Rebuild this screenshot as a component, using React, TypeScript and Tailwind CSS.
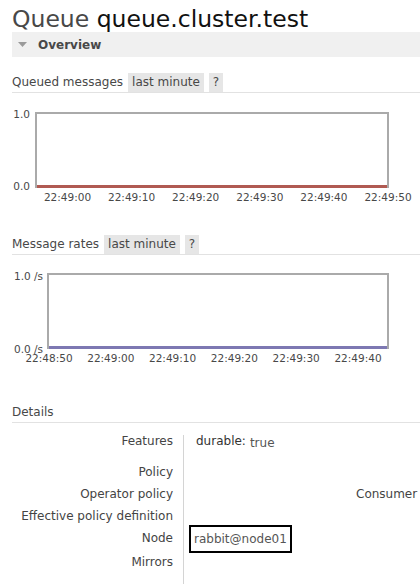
import React from "react";

function Chart(props: {
  height: number;
  padClass: string;
  boxClass: string;
  lineClass: string;
  yLabelClass: string;
  yTop: string;
  yBottom: string;
  yTopClass: string;
  yBottomClass: string;
  ticks: string[];
  firstCenter: number;
  step: number;
  tickTop: number;
}) {
  return (
    <div className={"relative " + props.padClass} style={{ height: props.height }}>
      <div className={props.boxClass}>
        <div className="flex-1" />
        <div className={props.lineClass} />
      </div>
      <div className={props.yLabelClass + " " + props.yTopClass}>{props.yTop}</div>
      <div className={props.yLabelClass + " " + props.yBottomClass}>{props.yBottom}</div>
      {props.ticks.map((t, i) => (
        <div
          key={t}
          className="absolute w-[60px] text-center text-[10.5px] leading-[12px] whitespace-nowrap text-[#484848]"
          style={{ left: props.firstCenter + i * props.step - 30, top: props.tickTop }}
        >
          {t}
        </div>
      ))}
    </div>
  );
}

function SectionHeading({ title, withOptions }: { title: string; withOptions?: boolean }) {
  return (
    <div className="flex h-[20px] items-stretch border-b border-[#e2e2e2] leading-[19px] whitespace-nowrap">
      <span>{title}</span>
      {withOptions && (
        <>
          <span className="ml-[5px] bg-[#e6e6e6] px-[4px]">last minute</span>
          <span className="ml-[5px] bg-[#e6e6e6] px-[4px]">?</span>
        </>
      )}
    </div>
  );
}

export default function App() {
  const rows1 = ["22:49:00", "22:49:10", "22:49:20", "22:49:30", "22:49:40", "22:49:50"];
  const rows2 = ["22:48:50", "22:49:00", "22:49:10", "22:49:20", "22:49:30", "22:49:40"];
  return (
    <div className="h-[584px] w-[420px] overflow-hidden bg-white font-['DejaVu_Sans',Verdana,sans-serif] text-[12px] text-[#484848]">
      <div className="pl-[12px]">
        <h1 className="h-[32px] whitespace-nowrap pt-[3px] text-[23.5px] font-normal leading-[32px] text-[#484848]">
          Queue <span className="text-[#111]">queue.cluster.test</span>
        </h1>
        <div className="flex h-[25px] items-center bg-[#f0f0f0]">
          <svg className="ml-[6px]" width="9" height="5" viewBox="0 0 9 5">
            <polygon points="0,0 9,0 4.5,5" fill="#9a9a9a" />
          </svg>
          <span className="ml-[11px] font-bold text-[#484848]">Overview</span>
        </div>

        <div className="mt-[16px]">
          <SectionHeading title="Queued messages" withOptions />
        </div>
        <Chart
          height={142}
          padClass="pt-[19px]"
          boxClass="ml-[23px] flex h-[76px] w-[354px] flex-col border-2 border-b-0 border-[#aaaaaa]"
          lineClass="h-[3px] bg-[#b05a52]"
          yLabelClass="absolute left-0 w-[18px] text-right text-[10.5px] leading-[12px] whitespace-nowrap"
          yTop="1.0"
          yBottom="0.0"
          yTopClass="top-[15px]"
          yBottomClass="top-[87px]"
          ticks={rows1}
          firstCenter={55.5}
          step={64.1}
          tickTop={98}
        />

        <SectionHeading title="Message rates" withOptions />
        <Chart
          height={148}
          padClass="pt-[18px]"
          boxClass="ml-[35px] flex h-[76px] w-[342px] flex-col border-2 border-b-0 border-[#aaaaaa]"
          lineClass="h-[3px] bg-[#7d78b2]"
          yLabelClass="absolute left-0 w-[31px] text-right text-[10.5px] leading-[12px] whitespace-nowrap"
          yTop="1.0 /s"
          yBottom="0.0 /s"
          yTopClass="top-[15px]"
          yBottomClass="top-[88px]"
          ticks={rows2}
          firstCenter={37}
          step={61.8}
          tickTop={97}
        />

        <SectionHeading title="Details" />

        <div className="mt-[12px] flex whitespace-nowrap">
          <div className="flex w-[328px] shrink-0 flex-col">
            <div className="flex h-[26px] leading-[12px]">
              <div className="w-[171px] pr-[10px] text-right text-[#444]">Features</div>
              <div className="flex flex-1 items-start border-l border-[#d4d4d4] pl-[12px]">
                <span className="text-[#333]">durable:</span>
                <span className="ml-[4px] pt-[2px] text-[#555]">true</span>
              </div>
            </div>
            <div className="flex h-[22px] leading-[22px]">
              <div className="w-[171px] pr-[10px] text-right text-[#444]">Policy</div>
              <div className="flex-1 border-l border-[#d4d4d4]" />
            </div>
            <div className="flex h-[22px] leading-[22px]">
              <div className="w-[171px] pr-[10px] text-right text-[#444]">Operator policy</div>
              <div className="flex-1 border-l border-[#d4d4d4]" />
            </div>
            <div className="flex h-[20px] leading-[22px]">
              <div className="w-[171px] pr-[10px] text-right text-[#444]">Effective policy definition</div>
              <div className="flex-1 border-l border-[#d4d4d4]" />
            </div>
            <div className="flex h-[28px]">
              <div className="w-[171px] pr-[10px] pt-[2px] text-right leading-[22px] text-[#444]">Node</div>
              <div className="flex-1 border-l border-[#d4d4d4]">
                <div className="ml-[5px] inline-block h-[28px] border-2 border-black px-[3px] leading-[24px] text-[#555]">
                  rabbit@node01
                </div>
              </div>
            </div>
            <div className="flex h-[31px] leading-[18px]">
              <div className="w-[171px] pr-[10px] text-right text-[#444]">Mirrors</div>
              <div className="flex-1 border-l border-[#d4d4d4]" />
            </div>
          </div>
          <div className="shrink-0 pl-[16px] pt-[48px] leading-[22px] text-[#444]">Consumer capacity</div>
        </div>
      </div>
    </div>
  );
}
